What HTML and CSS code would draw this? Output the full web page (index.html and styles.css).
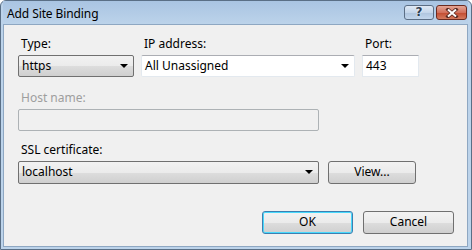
FILE: index.html
```html
<!DOCTYPE html>
<html lang="en">
<head>
  <meta charset="UTF-8">
  <title>Add Site Binding</title>
  <link rel="stylesheet" href="styles.css">
</head>
<body>

  <div class="window">
    <div class="titlebar">
      <span class="title">Add Site Binding</span>
      <div class="caption-buttons">
        <div class="cap-btn help">?</div>
        <div class="cap-btn close">
          <svg width="14" height="10" viewBox="0 0 14 10">
            <path d="M3 1.5 L11 8.5 M11 1.5 L3 8.5" stroke="#5a2a22" stroke-width="3.6" stroke-linecap="square"/>
            <path d="M3 1.5 L11 8.5 M11 1.5 L3 8.5" stroke="#fff" stroke-width="2"/>
          </svg>
        </div>
      </div>
    </div>

    <div class="content">
      <div class="row">
        <div class="field">
          <label>Type:</label>
          <div class="combo grey type">https<span class="arrow"></span></div>
        </div>
        <div class="field">
          <label>IP address:</label>
          <div class="combo white ip">All Unassigned<span class="arrow"></span></div>
        </div>
        <div class="field">
          <label>Port:</label>
          <div class="textbox port">443</div>
        </div>
      </div>

      <div class="field host">
        <label class="disabled">Host name:</label>
        <div class="textbox disabled-box"></div>
      </div>

      <div class="field ssl">
        <label>SSL certificate:</label>
        <div class="ssl-row">
          <div class="combo grey cert">localhost<span class="arrow"></span></div>
          <div class="button view">View...</div>
        </div>
      </div>

      <div class="footer">
        <div class="button default">OK</div>
        <div class="button">Cancel</div>
      </div>
    </div>
  </div>

</body>
</html>
```

FILE: styles.css
```css
body {
  margin: 0;
  font-family: "Segoe UI", "Noto Sans", "Open Sans", sans-serif;
  font-size: 12px;
  color: #000;
  background: #fff;
}

.window {
  width: 472px;
  height: 250px;
  box-sizing: border-box;
  background: #bcd3ea;
  border: 1px solid #5a6f86;
  border-radius: 6px 6px 0 0;
  padding: 0 3px 2px 2px;
  display: flex;
  flex-direction: column;
}

.titlebar {
  height: 23px;
  display: flex;
  align-items: flex-start;
  justify-content: space-between;
  background: linear-gradient(#a9c4e2, #bcd3ea);
}

.title {
  padding: 4px 0 0 4px;
  font-size: 12px;
  letter-spacing: -0.1px;
}

.caption-buttons {
  display: flex;
  gap: 2px;
  padding-top: 4px;
  margin-right: 1px;
}

.cap-btn {
  width: 30px;
  height: 15px;
  border: 1px solid #5b6e85;
  border-radius: 3px;
  display: flex;
  align-items: center;
  justify-content: center;
  box-sizing: border-box;
}

.help {
  background: linear-gradient(#dfe9f5 0%, #c4d6ea 50%, #aec4dd 51%, #c2d6ec 100%);
  color: #2d3d51;
  font-family: "DejaVu Sans", sans-serif;
  font-weight: bold;
  font-size: 12px;
  line-height: 13px;
  text-shadow: 0 0 2px #fff;
}

.close {
  width: 31px;
  background: linear-gradient(#e4a595 0%, #d2705b 50%, #c24a2f 51%, #d47a5e 100%);
  border-color: #6c2b20;
}

.content {
  flex: 1;
  background: #f0f0f0;
  border: 1px solid #8ea7c2;
  padding: 10px 13px 0 14px;
}

.row {
  display: flex;
  gap: 7px;
}

.field label {
  display: block;
  padding-left: 3px;
  height: 20px;
  line-height: 17px;
}

.combo {
  position: relative;
  box-sizing: border-box;
  height: 22px;
  line-height: 19px;
  padding-left: 3px;
  border: 1px solid #707070;
  border-radius: 2px;
}

.combo.grey {
  background: linear-gradient(#f2f2f2 0%, #ebebeb 50%, #dddddd 51%, #cfcfcf 100%);
}

.combo.white {
  background: #fff;
  border-color: #e3e9ef;
  border-top-color: #abadb3;
}

.arrow {
  position: absolute;
  right: 5px;
  top: 8px;
  width: 0;
  height: 0;
  border-left: 4px solid transparent;
  border-right: 4px solid transparent;
  border-top: 4px solid #000;
}

.type {
  width: 116px;
}

.ip {
  width: 214px;
}

.textbox {
  box-sizing: border-box;
  height: 22px;
  line-height: 19px;
  padding-left: 3px;
  background: #fff;
  border: 1px solid #e3e9ef;
  border-top-color: #abadb3;
}

.port {
  width: 57px;
}

.host {
  margin-top: 12px;
}

.disabled {
  color: #9e9e9e;
}

.disabled-box {
  width: 301px;
  background: #f0f0f0;
  border: 1px solid #adb2b5;
  border-radius: 2px;
}

.ssl {
  margin-top: 10px;
}

.ssl-row {
  display: flex;
  gap: 9px;
}

.cert {
  width: 301px;
  height: 23px;
}

.button {
  box-sizing: border-box;
  width: 88px;
  height: 23px;
  line-height: 20px;
  text-align: center;
  border: 1px solid #707070;
  border-radius: 3px;
  background: linear-gradient(#f2f2f2 0%, #ebebeb 50%, #dddddd 51%, #cfcfcf 100%);
}

.view {
  width: 88px;
}

.footer {
  display: flex;
  justify-content: flex-end;
  gap: 10px;
  margin-top: 27px;
}

.button.default {
  border-color: #3c7fb1;
  box-shadow: inset 0 0 0 1px #48d9fc;
}

.footer .button {
  width: 91px;
}
```
